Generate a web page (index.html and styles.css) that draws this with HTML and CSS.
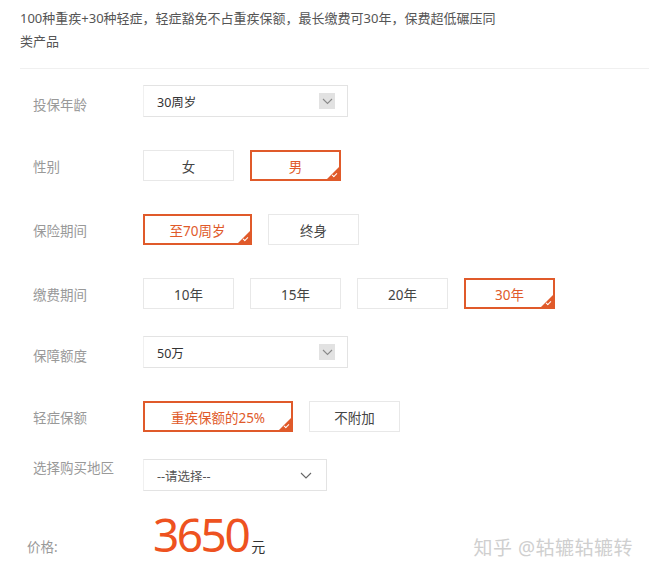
FILE: index.html
```html
<!DOCTYPE html>
<html lang="zh-CN">
  <head>
    <meta charset="utf-8" />
    <meta name="viewport" content="width=device-width, initial-scale=1" />
    <title>重疾险投保</title>
    <link rel="stylesheet" href="styles.css">
  </head>
  <body>
    <main class="page">
      <p class="intro">100种重疾+30种轻症，轻症豁免不占重疾保额，最长缴费可30年，保费超低碾压同类产品</p>

      <section class="form">
        <div class="row">
          <span class="label label-low">投保年龄</span>
          <div class="select">
            <span>30周岁</span>
            <span class="arrow-box">
              <svg width="11" height="7" viewBox="0 0 11 7"><path d="M1 1l4.5 4.5L10 1" fill="none" stroke="#8a8a8a" stroke-width="1.1"/></svg>
            </span>
          </div>
        </div>

        <div class="row">
          <span class="label">性别</span>
          <div class="options">
            <button class="opt">女</button>
            <button class="opt active">男</button>
          </div>
        </div>

        <div class="row">
          <span class="label">保险期间</span>
          <div class="options">
            <button class="opt wide active">至70周岁</button>
            <button class="opt">终身</button>
          </div>
        </div>

        <div class="row tight">
          <span class="label">缴费期间</span>
          <div class="options">
            <button class="opt">10年</button>
            <button class="opt">15年</button>
            <button class="opt">20年</button>
            <button class="opt active">30年</button>
          </div>
        </div>

        <div class="row">
          <span class="label label-low">保障额度</span>
          <div class="select">
            <span>50万</span>
            <span class="arrow-box">
              <svg width="11" height="7" viewBox="0 0 11 7"><path d="M1 1l4.5 4.5L10 1" fill="none" stroke="#8a8a8a" stroke-width="1.1"/></svg>
            </span>
          </div>
        </div>

        <div class="row tight">
          <span class="label">轻症保额</span>
          <div class="options">
            <button class="opt xwide active">重疾保额的25%</button>
            <button class="opt">不附加</button>
          </div>
        </div>

        <div class="row top">
          <span class="label">选择购买地区</span>
          <div class="select region">
            <span>--请选择--</span>
            <svg class="chev" width="12" height="7" viewBox="0 0 12 7"><path d="M1 1l5 5 5-5" fill="none" stroke="#666" stroke-width="1.1"/></svg>
          </div>
        </div>

        <div class="price-row">
          <span class="price-label">价格:</span>
          <span class="price">3650</span><span class="unit">元</span>
        </div>
      </section>

      <div class="watermark">知乎 @轱辘轱辘转</div>
    </main>
  </body>
</html>
```

FILE: styles.css
```css
:root {
  --text: #444;
  --muted: #999;
  --line: #e3e3e3;
  --accent: #e05a2a;
  --price: #ee5220;
  --font: "Noto Sans", "Noto Sans CJK SC", sans-serif;
}

* {
  margin: 0;
  padding: 0;
  box-sizing: border-box;
}

html,
body {
  background: #fff;
  font-family: var(--font);
  color: var(--text);
}

.page {
  position: relative;
  height: 578px;
  padding-left: 20px;
  overflow: hidden;
}

.intro {
  max-width: 486px;
  padding-top: 7px;
  font-size: 13px;
  line-height: 23px;
  color: #555;
}

.form {
  margin-top: 15px;
  border-top: 1px solid #f0f0f0;
  padding-top: 16px;
}

.row {
  display: flex;
  align-items: center;
  margin-bottom: 33px;
}

.row.tight {
  margin-bottom: 27px;
}

.row.top {
  align-items: flex-start;
  margin-bottom: 0;
}

.label {
  flex: none;
  width: 123px;
  padding-left: 13px;
  font-size: 13.5px;
  color: var(--muted);
}

.label-low {
  padding-top: 5px;
}

.row.top .label {
  line-height: 18px;
}

/* select boxes */
.select {
  display: flex;
  align-items: center;
  justify-content: space-between;
  width: 205px;
  height: 32px;
  padding: 0 12px 0 13px;
  border: 1px solid var(--line);
  border-left-color: #f0f0f0;
  font-size: 12.5px;
  color: #333;
}

.arrow-box {
  display: flex;
  align-items: center;
  justify-content: center;
  width: 16px;
  height: 16px;
  background: #e2e2e2;
}

.select.region {
  width: 184px;
  padding-right: 14px;
  color: #555;
}

/* option buttons */
.options {
  display: flex;
  gap: 16px;
}

.opt {
  position: relative;
  width: 91px;
  height: 31px;
  border: 1px solid #e8e8e8;
  background: #fff;
  font-family: var(--font);
  font-size: 13.5px;
  color: #444;
}

.opt.wide {
  width: 109px;
}

.opt.xwide {
  width: 150px;
}

.opt.active {
  border: 2px solid var(--accent);
  color: var(--accent);
}

.opt.active::after {
  content: "";
  position: absolute;
  right: 0;
  bottom: 0;
  border-style: solid;
  border-width: 0 0 12px 12px;
  border-color: transparent transparent var(--accent) transparent;
}

.opt.active::before {
  content: "";
  position: absolute;
  right: 2px;
  bottom: 3px;
  width: 4px;
  height: 2px;
  border-left: 1px solid #fff;
  border-bottom: 1px solid #fff;
  transform: rotate(-45deg);
  z-index: 1;
}

/* price */
.price-row {
  display: flex;
  align-items: baseline;
  margin-top: 18px;
}

.price-label {
  width: 133px;
  padding-left: 7px;
  font-size: 13.5px;
  color: var(--muted);
}

.price {
  font-size: 46px;
  letter-spacing: -2.5px;
  line-height: 50px;
  color: var(--price);
}

.unit {
  margin-left: 3px;
  font-size: 14px;
  color: #333;
}

.watermark {
  position: absolute;
  right: 16px;
  bottom: 17px;
  font-size: 19px;
  color: #cfcfcf;
  letter-spacing: 0.5px;
}
```
